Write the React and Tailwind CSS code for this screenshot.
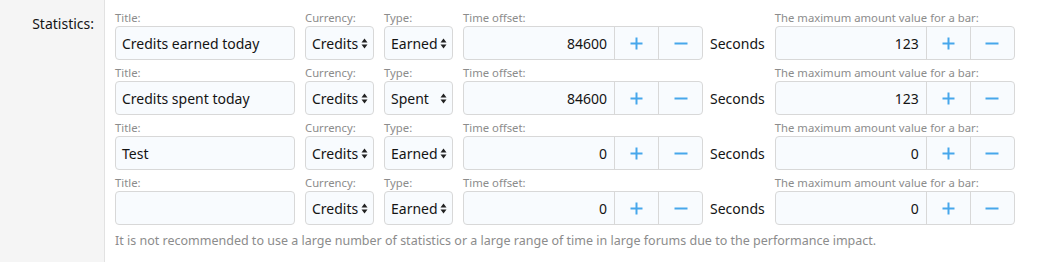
import React from "react";

const rows = [
  { title: "Credits earned today", type: "Earned", offset: "84600", max: "123" },
  { title: "Credits spent today", type: "Spent", offset: "84600", max: "123" },
  { title: "Test", type: "Earned", offset: "0", max: "0" },
  { title: "", type: "Earned", offset: "0", max: "0" },
];

function Arrows() {
  return (
    <svg width="7" height="11" viewBox="0 0 7 11" className="shrink-0">
      <path d="M3.5 0.5 L6.5 4.5 L0.5 4.5 Z" fill="#222" />
      <path d="M3.5 10.5 L6.5 6.5 L0.5 6.5 Z" fill="#222" />
    </svg>
  );
}

function Plus() {
  return (
    <svg width="13" height="13" viewBox="0 0 13 13">
      <path d="M6.5 0.5 V12.5 M0.5 6.5 H12.5" stroke="#47a7eb" strokeWidth="2" />
    </svg>
  );
}

function Minus() {
  return (
    <svg width="14" height="13" viewBox="0 0 14 13">
      <path d="M0.5 6.5 H13.5" stroke="#47a7eb" strokeWidth="2" />
    </svg>
  );
}

function Label({ children }) {
  return <div className="h-[17px] text-[11.3px] leading-[17px] text-[#8c8c8c] whitespace-nowrap">{children}</div>;
}

function Spinner({ value }) {
  return (
    <div className="flex h-[34px] w-[240px] rounded-[4px] border border-[#d8d8d8] bg-[#f8fbfe]">
      <div className="flex flex-1 items-center justify-end pr-[7px] text-[#141414]">{value}</div>
      <div className="flex w-[44px] items-center justify-center border-l border-[#d8d8d8]">
        <Plus />
      </div>
      <div className="flex w-[44px] items-center justify-center border-l border-[#d8d8d8]">
        <Minus />
      </div>
    </div>
  );
}

function Select({ value }) {
  return (
    <div className="flex h-[34px] w-[69px] items-center justify-between rounded-[4px] border border-[#d8d8d8] bg-[#f8fbfe] pl-[6px] pr-[5px] text-[#141414]">
      <span>{value}</span>
      <Arrows />
    </div>
  );
}

export default function App() {
  return (
    <div className="flex h-[262px] w-[1058px] bg-white text-[14px] font-['Noto_Sans',sans-serif]">
      {/* label column */}
      <div className="w-[105px] shrink-0 border-r border-[#e2e2e2] bg-[#f5f5f5] pr-[10px] pt-[13px] text-right text-[14px] text-[#141414]">
        Statistics:
      </div>

      {/* fields */}
      <div className="flex flex-col pl-[10px] pt-[9px]">
        <div className="flex flex-col gap-[4px]">
          {rows.map((r, i) => (
            <div key={i} className="flex items-end gap-[10px]">
              <div className="w-[180px]">
                <Label>Title:</Label>
                <div className="flex h-[34px] items-center rounded-[4px] border border-[#d8d8d8] bg-[#f8fbfe] px-[6px] text-[#141414]">
                  {r.title}
                </div>
              </div>
              <div>
                <Label>Currency:</Label>
                <Select value="Credits" />
              </div>
              <div>
                <Label>Type:</Label>
                <Select value={r.type} />
              </div>
              <div className="flex items-end gap-[7px]">
                <div>
                  <Label>Time offset:</Label>
                  <Spinner value={r.offset} />
                </div>
                <div className="flex h-[34px] items-center text-[#141414]">Seconds</div>
              </div>
              <div>
                <Label>The maximum amount value for a bar:</Label>
                <Spinner value={r.max} />
              </div>
            </div>
          ))}
        </div>
        <div className="mt-[7px] text-[12.5px] text-[#8c8c8c]">
          It is not recommended to use a large number of statistics or a large range of time in large forums due to the performance impact.
        </div>
      </div>
    </div>
  );
}
